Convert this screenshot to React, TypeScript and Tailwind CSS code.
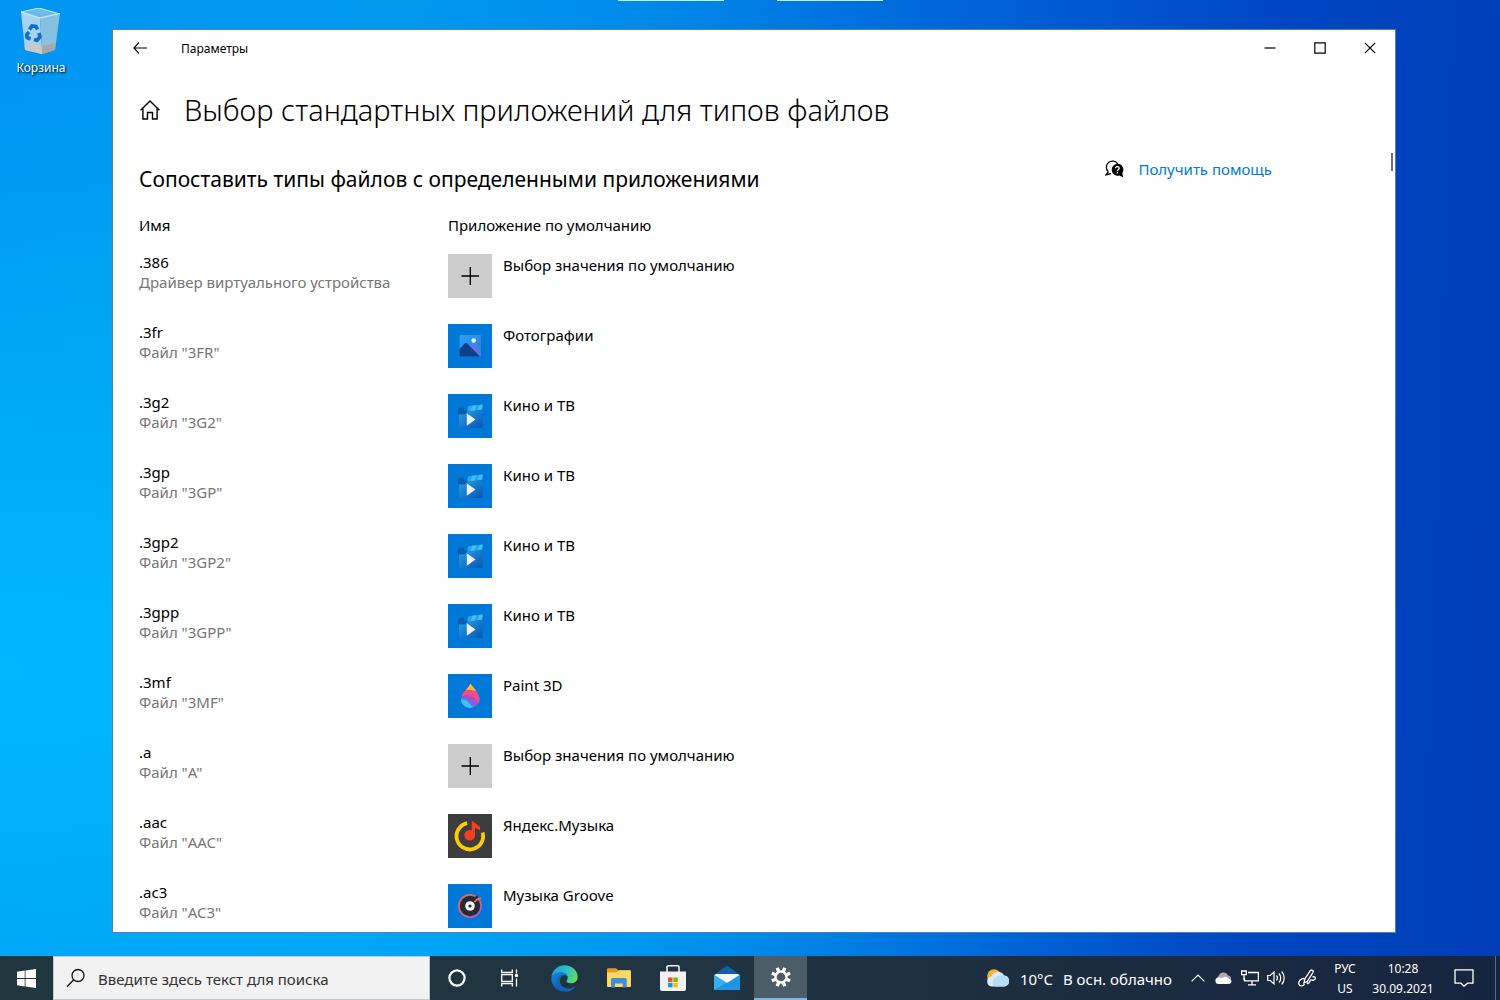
import { ReactNode } from "react";

type AppId = "none" | "photos" | "movies" | "paint" | "yandex" | "groove";

type FileType = {
  ext: string;
  description: string;
  app: AppId;
};

const appNames: Record<AppId, string> = {
  none: "Выбор значения по умолчанию",
  photos: "Фотографии",
  movies: "Кино и ТВ",
  paint: "Paint 3D",
  yandex: "Яндекс.Музыка",
  groove: "Музыка Groove",
};

const fileTypes: FileType[] = [
  { ext: ".386", description: "Драйвер виртуального устройства", app: "none" },
  { ext: ".3fr", description: 'Файл "3FR"', app: "photos" },
  { ext: ".3g2", description: 'Файл "3G2"', app: "movies" },
  { ext: ".3gp", description: 'Файл "3GP"', app: "movies" },
  { ext: ".3gp2", description: 'Файл "3GP2"', app: "movies" },
  { ext: ".3gpp", description: 'Файл "3GPP"', app: "movies" },
  { ext: ".3mf", description: 'Файл "3MF"', app: "paint" },
  { ext: ".a", description: 'Файл "A"', app: "none" },
  { ext: ".aac", description: 'Файл "AAC"', app: "yandex" },
  { ext: ".ac3", description: 'Файл "AC3"', app: "groove" },
];

const tileColors: Record<AppId, string> = {
  none: "bg-[#cccccc]",
  photos: "bg-[#0078d7]",
  movies: "bg-[#0078d7]",
  paint: "bg-[#0078d7]",
  yandex: "bg-[#3d3d3d]",
  groove: "bg-[#0078d7]",
};

/* All the tile glyphs are drawn on the 44x44 grid of the tile */
const tileGlyphs: Record<AppId, ReactNode> = {
  none: <path d="M13.500 22h17.500M22.300 13v18" stroke="#000" strokeWidth="1.300" />,
  photos: (
    <>
      <defs>
        <linearGradient id="photoSky" x1="0" y1="0" x2="1" y2="1">
          <stop offset="0" stopColor="#22a6f4" />
          <stop offset="1" stopColor="#3a74d8" />
        </linearGradient>
      </defs>
      <rect x="11.500" y="11" width="21.500" height="21.500" rx="1" fill="url(#photoSky)" />
      <path d="M20 25l4.500-5c.8-.8 1.600-.8 2.400 0l6 6.500v5a1 1 0 0 1-1 1h-7z" fill="#5b7be0" />
      <path d="M11.500 25l5.200-5.600c.8-.9 1.800-.9 2.600 0L32 32.500H12.500a1 1 0 0 1-1-1z" fill="#123f8c" />
      <circle cx="25.700" cy="16.500" r="2.300" fill="#e4f5ff" />
    </>
  ),
  movies: (
    <>
      <defs>
        <linearGradient id="clapBody" x1="0" y1="0" x2="1" y2="1">
          <stop offset="0" stopColor="#2aa0e2" />
          <stop offset="1" stopColor="#0754b4" />
        </linearGradient>
      </defs>
      <path d="M10 20.500v-4c0-1.600 1.200-2.700 2.700-2.700l3.300-.3v3l3 .5v3.500z" fill="#0a5cb0" />
      <path d="M19.500 14.500c0-1.300.8-2.200 2-2.400l13-1.600v5.200l-15 2z" fill="#27a5ea" />
      <path d="M24.500 11.700l4-.5-2 5.400-4 .5zM31.500 10.900l3-.4v2l-1.300 3.200-3.500.4z" fill="#45bdf2" />
      <path d="M11 20.500h6l3-3.500h14.500v15.500a1.500 1.500 0 0 1-1.500 1.500H12.500a1.500 1.500 0 0 1-1.500-1.500z" fill="url(#clapBody)" />
      <path d="M18.800 19.300v12.400l8.700-6.200z" fill="#f1f1f3" />
    </>
  ),
  paint: (
    <>
      <defs>
        <clipPath id="drop">
          <path d="M22.500 9.500c2.500 4.500 9 9.500 9 15.500 0 5-4 8.700-9.200 8.700S13 30 13 25c0-6 7.500-10.500 9.500-15.500z" />
        </clipPath>
      </defs>
      <g clipPath="url(#drop)">
        <rect x="12" y="9" width="20" height="26" fill="#a050d0" />
        <path d="M12 9h20v22c-3-3-4-7-8-8.500s-8-1-11-.5z" fill="#ee4f88" />
        <path d="M18 9h12v8.500c-4-.5-7-2.500-12-1.500z" fill="#f9c020" />
        <path d="M12 24.500c5-1 9 .5 11 3.500s5 4 8 3v5H12z" fill="#5a78ee" />
        <path d="M12 25.500c5-.5 7 1 9 3.500s3 4 6 4.500v2H12z" fill="#3cc4f4" />
      </g>
    </>
  ),
  yandex: (
    <>
      <path d="M19.200 9.100a13.300 13.300 0 1 0 15.400 9.400" fill="none" stroke="#fccc08" strokeWidth="3.800" />
      <circle cx="21.700" cy="21.300" r="5.300" fill="#fb3c1c" />
      <path d="M23.700 6.500l8.300 6.200v3.500l-5-2.500v8h-3.300z" fill="#fb3c1c" />
    </>
  ),
  groove: (
    <>
      <defs>
        <linearGradient id="grooveRing" x1="0" y1="0" x2="1" y2="1">
          <stop offset="0" stopColor="#f0734a" />
          <stop offset="1" stopColor="#9a5cd8" />
        </linearGradient>
      </defs>
      <circle cx="22" cy="22" r="12" fill="url(#grooveRing)" />
      <circle cx="22" cy="22" r="10.200" fill="#272a33" />
      <path d="M22 17l7-5.500 1.500 1.500-3 5z" fill="#272a33" />
      <path d="M26.500 18l2.200-2.300 4.300-1.700" fill="none" stroke="#f27a55" strokeWidth="1.800" />
      <circle cx="22" cy="22" r="4.800" fill="#f4f4f4" />
      <circle cx="22" cy="22" r="1.600" fill="#272a33" />
    </>
  ),
};

const AppTile = ({ app }: { app: AppId }) => (
  <span className={`block h-11 w-11 shrink-0 ${tileColors[app]}`}>
    <svg viewBox="0 0 44 44" className="h-11 w-11" aria-hidden="true">
      {tileGlyphs[app]}
    </svg>
  </span>
);

const RecycleBin = () => (
  <svg viewBox="0 0 44 48" className="h-12 w-11" aria-hidden="true">
    <path d="M2 4l18-4 21 6-20 5z" fill="#6cbcea" stroke="#c9e6f6" strokeWidth="1" />
    <path d="M2 4l19 6 2 36-17-4z" fill="#a5d3f0" />
    <path d="M21 10l20-5-5 37-13 4z" fill="#88c0e0" />
    <path d="M5.700 37l8-2 9.100 3 .2 8-17-4z" fill="#cfc9c5" />
    <path d="M22.800 38l14-3-.8 7-13 4z" fill="#a9a8a8" />
    <path d="M2 4l19 6 20-4.500" fill="none" stroke="#d6eefa" strokeWidth="1.200" />
    <g fill="none" stroke="#0d6fd0" strokeWidth="3.600">
      <path d="M10.500 21.500l2.500-3.500 4 .5 1.500 3" />
      <path d="M20 25l1 4-3 3.200-3-.7" />
      <path d="M11.500 31l-3.500-1.500-.3-3 2.300-2.500" />
    </g>
  </svg>
);

const WindowsLogo = () => (
  <svg viewBox="0 0 19 19" className="h-[19px] w-[19px]" fill="#fff" aria-hidden="true">
    <path d="M0 2.700l7.700-1.100v7.500H0zM8.500 1.500L19 0v9.100H8.500zM0 9.900h7.700v7.500L0 16.300zM8.500 9.900H19V19L8.500 17.500z" />
  </svg>
);

const CortanaIcon = () => (
  <svg viewBox="0 0 18 18" className="h-[18px] w-[18px]" fill="none" stroke="#fff" strokeWidth="2.200" aria-hidden="true">
    <circle cx="9" cy="9" r="7.600" />
  </svg>
);

const TaskViewIcon = () => (
  <svg viewBox="0 0 20 18" className="h-[18px] w-5" fill="none" stroke="#fff" strokeWidth="1.300" aria-hidden="true">
    <path d="M1.700.5v3h10.600v-3M1.700 17.500v-3h10.600v3M1.700 5.700h10.600v6.600H1.700zM16.500.5v4M16.500 9.500v8" />
    <circle cx="16.500" cy="6.500" r="1.100" fill="#fff" />
  </svg>
);

const EdgeIcon = () => (
  <svg viewBox="0 0 27 27" className="h-[27px] w-[27px]" aria-hidden="true">
    <defs>
      <linearGradient id="edgeTop" x1="0" y1="0.300" x2="1" y2="0.600">
        <stop offset="0" stopColor="#1c9ce0" />
        <stop offset="0.550" stopColor="#2fc0c8" />
        <stop offset="1" stopColor="#62dd58" />
      </linearGradient>
      <linearGradient id="edgeLow" x1="0" y1="0" x2="0.600" y2="1">
        <stop offset="0" stopColor="#1a86d8" />
        <stop offset="1" stopColor="#0e55a8" />
      </linearGradient>
    </defs>
    <path d="M.5 11.500C1.500 5 7 .3 13.500.3 21 .3 26.700 5.500 26.700 12c0 4-3.200 6.300-6.700 6.300-3 0-4.500-1-4.500-2 0-.8 1.200-1.300 1.200-3.500 0-2.700-2.700-5-6-5-5 0-9.200 3.200-10.200 3.700z" fill="url(#edgeTop)" />
    <path d="M.3 13.500C.3 9.500 4.500 7 9.500 7c4 0 7.200 2.400 7.200 5.600 0-1.600-1.600-2.600-3.200-2.600-2.700 0-4.700 2.700-4.700 6 0 5 4.500 7.700 8.500 7.700 3.500 0 6-1.400 7.200-2.400-1.800 3-5.800 5.400-11 5.400C6 26.700.3 20.700.3 13.500z" fill="url(#edgeLow)" />
    <path d="M8.800 16c0-3.300 2-6 4.700-6-4.200-1-7.700 2.500-7.700 7 0 5.500 4.700 9.500 9.700 9.500 4 0 7.500-2.500 9-5.200-1.200 1-3.700 2.400-7.200 2.400-4 0-8.500-2.700-8.500-7.700z" fill="#1266b8" />
  </svg>
);

const ExplorerIcon = () => (
  <svg viewBox="0 0 24 20" className="h-5 w-6" aria-hidden="true">
    <path d="M0 1.500A1.200 1.200 0 0 1 1.200.3h8l2 2.200H23v5H0z" fill="#e0a019" />
    <path d="M0 4.500h9.500L12 2.300h11a1 1 0 0 1 1 1V18a1 1 0 0 1-1 1H1a1 1 0 0 1-1-1z" fill="#ffd866" />
    <path d="M4 19.500v-8A1.500 1.500 0 0 1 5.500 10h12.700a1.500 1.500 0 0 1 1.500 1.500v8h-4v-4H8v4z" fill="#3d8fd8" />
  </svg>
);

const StoreIcon = () => (
  <svg viewBox="0 0 26 26" className="h-[26px] w-[26px]" aria-hidden="true">
    <path d="M7 8V1.800A1.300 1.300 0 0 1 8.300.8h9.400A1.300 1.300 0 0 1 19 2v6" fill="none" stroke="#f2f2f2" strokeWidth="1.600" />
    <path d="M0 6.500h26v17.500a2 2 0 0 1-2 2H2a2 2 0 0 1-2-2z" fill="#f2f2f2" />
    <path d="M8 12.500h4.500V17H8z" fill="#f04b22" />
    <path d="M13.300 12.500h4.500V17h-4.500z" fill="#7fba00" />
    <path d="M8 17.800h4.500v4.500H8z" fill="#00a0e8" />
    <path d="M13.300 17.800h4.500v4.500h-4.500z" fill="#fdb80a" />
  </svg>
);

const MailIcon = () => (
  <svg viewBox="0 0 28 26" className="h-[26px] w-7" aria-hidden="true">
    <path d="M1 10L14 .5 27 10v8H1z" fill="#0f5fb0" />
    <path d="M1 9.700l13 8.200 13-8.200v15.300H1z" fill="#35b0ee" />
    <path d="M1 25L27 9.700V25z" fill="#1e95de" />
    <path d="M3 9h22l1.500 1L14 18 1.500 10z" fill="#f4f7fa" />
  </svg>
);

const GearIcon = () => (
  <svg viewBox="0 0 20 20" className="h-5 w-5" fill="none" stroke="#fff" aria-hidden="true">
    <circle cx="10" cy="10" r="5.500" strokeWidth="2.400" />
    <path
      d="M15.500 7.700l3.600-1.500M12.300 4.500l1.500-3.600M7.700 4.500L6.200.9M4.500 7.700L.9 6.200M4.500 12.300l-3.600 1.500M7.700 15.500l-1.500 3.600M12.300 15.500l1.500 3.600M15.500 12.300l3.600 1.500"
      strokeWidth="3.400"
    />
  </svg>
);

const WeatherIcon = () => (
  <svg viewBox="0 0 24 20" className="h-5 w-6" aria-hidden="true">
    <circle cx="8" cy="8" r="6.800" fill="#f7b52c" />
    <path d="M6 18.500a5 5 0 0 1-.8-9.900A7 7 0 0 1 18 7.600a5.500 5.500 0 0 1 .5 10.900z" fill="#d6edf9" />
    <path d="M9 18.500a4.500 4.500 0 0 1 1-8.500 6 6 0 0 1 8-2.400 5.500 5.500 0 0 1 .5 10.900z" fill="#b6def5" />
  </svg>
);

const CloudIcon = () => (
  <svg viewBox="0 0 18 12" className="h-3 w-[18px]" aria-hidden="true">
    <path d="M3 8.500a3 3 0 0 1 .8-4.800A5 5 0 0 1 13 3.500a3.600 3.600 0 0 1 3 4z" fill="#a9adb2" />
    <path d="M3.500 12a3.300 3.300 0 0 1-.6-6.500c2-.4 3 .3 3.800.8a4.500 4.500 0 0 1 6-.6c.8.500 1 1 1.600 1a2.700 2.700 0 0 1 0 5.300z" fill="#fff" />
  </svg>
);

const NetworkIcon = () => (
  <svg viewBox="0 0 18 16" className="h-4 w-[18px]" fill="none" stroke="#fff" strokeWidth="1.300" aria-hidden="true">
    <path d="M7 2.500h10.400v8.400H3.500V8M11 11v3.500M7 14.900h8" />
    <path d="M.6 1h4.700v3.700H.6zM3 5v5" />
  </svg>
);

const SoundIcon = () => (
  <svg viewBox="0 0 19 16" className="h-4 w-[19px]" fill="none" stroke="#fff" strokeWidth="1.200" aria-hidden="true">
    <path d="M.7 5.500h2.500L7 2v12l-3.800-3.500H.7z" />
    <path d="M9.500 5.500c1.300 1.500 1.300 3.500 0 5M12 3.500c2.300 2.500 2.300 6.500 0 9M14.700 1.500c3.300 3.700 3.300 9.300 0 13" />
  </svg>
);

const PenIcon = () => (
  <svg viewBox="0 0 18 18" className="h-[18px] w-[18px]" fill="none" stroke="#fff" strokeWidth="1.300" aria-hidden="true">
    <path d="M6 14l.8-4L12.500 1.500c1-1.200 3.300.3 2.500 1.800L9.500 12z" />
    <path d="M6.500 9.500C3 9.300.3 12 .8 14.800s4.500 2.700 5.700.2M9.500 12c-1 2.500.5 3.500 1.700 1.500s.8-3 2.300-2.500 3.500.2 3.800-1.500-1.500-2-3-1.500" />
  </svg>
);

const HelpIcon = () => (
  <svg viewBox="0 0 19 18" className="h-[18px] w-[19px]" aria-hidden="true">
    <path d="M3.300 11.800A6.200 6.200 0 1 1 12.800 4M3.300 11.800L1 14.800l5-1.300" fill="none" stroke="#000" strokeWidth="1.300" />
    <path d="M12.300 3.700a6 6 0 0 1 5 9.400l.9 4.200-4-1.800a6 6 0 1 1-1.900-11.800z" fill="#000" />
    <path d="M10.500 8.300c0-2.300 3.700-2.300 3.700 0 0 1.300-1.800 1.300-1.800 2.900M12.400 12.300v1.300" fill="none" stroke="#fff" strokeWidth="1.300" />
  </svg>
);

const taskbarApps = [
  { name: "Microsoft Edge", icon: <EdgeIcon /> },
  { name: "Проводник", icon: <ExplorerIcon /> },
  { name: "Microsoft Store", icon: <StoreIcon /> },
  { name: "Почта", icon: <MailIcon /> },
];

const SettingsWindow = () => (
  <section className="flex h-full flex-col overflow-hidden border border-[#0b4a8c]/70 bg-white text-black">
    <div className="flex h-9 shrink-0 items-center">
      <button type="button" aria-label="Назад" className="flex h-9 w-[53px] items-center justify-center">
        <svg viewBox="0 0 14 12" className="h-3 w-3.5" fill="none" stroke="#000" strokeWidth="1.200">
          <path d="M6 .7L.9 6 6 11.300M1 6h13" />
        </svg>
      </button>
      <span className="ml-[15px] pt-px text-[12px]">Параметры</span>
      <div className="ml-auto flex">
        <button type="button" aria-label="Свернуть" className="flex h-9 w-[50px] items-center justify-center">
          <svg viewBox="0 0 12 12" className="h-3 w-3" stroke="#000" strokeWidth="1.200">
            <path d="M.5 6h11" />
          </svg>
        </button>
        <button type="button" aria-label="Развернуть" className="flex h-9 w-[50px] items-center justify-center">
          <svg viewBox="0 0 12 12" className="h-3 w-3" fill="none" stroke="#000" strokeWidth="1.200">
            <path d="M.8.8h10.400v10.400H.8z" />
          </svg>
        </button>
        <button type="button" aria-label="Закрыть" className="flex h-9 w-[50px] items-center justify-center">
          <svg viewBox="0 0 12 12" className="h-3 w-3" stroke="#000" strokeWidth="1.200">
            <path d="M.8.8l10.400 10.400M11.200.8L.8 11.200" />
          </svg>
        </button>
      </div>
    </div>

    <div className="mt-[22px] flex shrink-0 items-center gap-6 pl-[27px]">
      <a href="#home" aria-label="Главная">
        <svg viewBox="0 0 20 20" className="h-5 w-5" fill="none" stroke="#000" strokeWidth="1.400">
          <path d="M.6 10.300L10 1l9.400 9.300M2.900 8.500V19h4.600v-6.500h5V19h4.600V8.500" />
        </svg>
      </a>
      <h1 className="text-[29px] leading-[44px] font-light">Выбор стандартных приложений для типов файлов</h1>
    </div>

    <div className="mt-[19px] flex min-h-0 flex-1 items-start justify-between">
      <div className="min-w-0 pl-[26px]">
        <h2 className="mt-3.5 text-[21px] leading-7">Сопоставить типы файлов с определенными приложениями</h2>
        <table className="mt-5 text-left text-[15px] leading-5">
          <thead>
            <tr className="h-[39px] align-top">
              <th scope="col" className="w-[309px] pt-0.5 font-normal">Имя</th>
              <th scope="col" className="pt-0.5 font-normal">Приложение по умолчанию</th>
            </tr>
          </thead>
          <tbody>
            {fileTypes.map((item) => (
              <tr key={item.ext} className="h-[70px] align-top">
                <td>
                  <div>{item.ext}</div>
                  <div className="text-[#767676]">{item.description}</div>
                </td>
                <td className="pt-0.5">
                  <button type="button" className="flex items-start gap-[11px] text-left">
                    <AppTile app={item.app} />
                    <span className="pt-px">{appNames[item.app]}</span>
                  </button>
                </td>
              </tr>
            ))}
          </tbody>
        </table>
      </div>
      <div className="flex items-start">
        <a href="#help" className="mt-1.5 flex items-center gap-3.5 text-[15px] leading-6 text-[#0078d7]">
          <HelpIcon />
          Получить помощь
        </a>
        <div className="mt-0.5 mr-0.5 ml-[119px] h-[18px] w-0.5 bg-[#707070]" />
      </div>
    </div>
  </section>
);

const Taskbar = () => (
  <footer className="flex h-11 shrink-0 items-stretch bg-linear-to-r from-[#20363f] via-[#203341] to-[#17243f] text-white">
    <button type="button" aria-label="Пуск" className="flex w-[53px] items-center justify-center">
      <WindowsLogo />
    </button>
    <label className="flex w-[377px] items-center gap-3 border border-[#c4c8ca] bg-[#f2f2f2] pl-3">
      <svg viewBox="0 0 20 20" className="h-5 w-5 shrink-0" fill="none" stroke="#111" strokeWidth="1.300">
        <circle cx="12" cy="7.500" r="6" />
        <path d="M7.700 11.800L1 18.800" />
      </svg>
      <input
        type="text"
        aria-label="Поиск"
        placeholder="Введите здесь текст для поиска"
        className="min-w-0 flex-1 bg-transparent pt-0.5 text-[15px] text-[#333] outline-none placeholder:text-[#333]"
      />
    </label>
    <button type="button" aria-label="Кортана" className="flex w-[53px] items-center justify-center">
      <CortanaIcon />
    </button>
    <button type="button" aria-label="Представление задач" className="flex w-[53px] items-center justify-center">
      <TaskViewIcon />
    </button>
    <div className="ml-0.5 flex gap-px">
      {taskbarApps.map((app) => (
        <button key={app.name} type="button" aria-label={app.name} className="flex w-[53px] items-center justify-center">
          {app.icon}
        </button>
      ))}
      <button
        type="button"
        aria-label="Параметры"
        className="flex w-[53px] items-center justify-center border-b-2 border-[#76b9ed] bg-[#4d5d67]"
      >
        <GearIcon />
      </button>
    </div>

    <div className="ml-auto flex items-stretch">
      <button type="button" className="mr-3 flex items-center gap-2.5 text-[15px]">
        <WeatherIcon />
        <span className="pt-0.5">10°C</span>
        <span className="pt-0.5">В осн. облачно</span>
      </button>
      <button type="button" aria-label="Скрытые значки" className="flex w-[27px] items-center justify-center">
        <svg viewBox="0 0 14 8" className="h-2 w-3.5" fill="none" stroke="#fff" strokeWidth="1.200">
          <path d="M.6 7.400L7 1l6.400 6.400" />
        </svg>
      </button>
      <button type="button" aria-label="OneDrive" className="flex w-[26px] items-center justify-center">
        <CloudIcon />
      </button>
      <button type="button" aria-label="Сеть" className="flex w-[26px] items-center justify-center">
        <NetworkIcon />
      </button>
      <button type="button" aria-label="Громкость" className="flex w-[26px] items-center justify-center">
        <SoundIcon />
      </button>
      <button type="button" aria-label="Windows Ink" className="flex w-9 items-center justify-center">
        <PenIcon />
      </button>
      <button type="button" className="flex w-10 flex-col items-center justify-center pt-0.5 text-[12px] leading-5">
        <span>РУС</span>
        <span>US</span>
      </button>
      <button type="button" className="flex w-[76px] flex-col items-center justify-center pt-0.5 text-[12px] leading-5">
        <span>10:28</span>
        <span>30.09.2021</span>
      </button>
      <button type="button" aria-label="Уведомления" className="flex w-[46px] items-center justify-center">
        <svg viewBox="0 0 20 18" className="h-[18px] w-5" fill="none" stroke="#fff" strokeWidth="1.300">
          <path d="M1 .8h18v13.400h-5.500l-3.500 3-3-3H1z" />
        </svg>
      </button>
      <div className="mr-1 ml-2 w-px bg-[#5b6880]" />
    </div>
  </footer>
);

const App = () => {
  return (
    <div className="flex h-screen flex-col overflow-hidden bg-[radial-gradient(ellipse_at_0%_67%,#00b8ff_0%,#00b8ff00_62%),linear-gradient(92deg,#0096f2_0%,#0099f0_26%,#008aea_42%,#0074e0_54%,#005cd2_68%,#0046c2_84%,#003eb8_100%)] font-['Noto_Sans',sans-serif]">
      <main className="relative flex min-h-0 flex-1">
        {/* edges of the snapped panels above the screen */}
        <div className="absolute inset-x-0 top-0 flex justify-center gap-[53px]">
          <div className="h-px w-[106px] bg-[#bfeaff]" />
          <div className="h-px w-[106px] bg-[#bfeaff]" />
        </div>
        <div className="w-[112px] shrink-0 pt-2 pl-2">
          <button type="button" className="flex w-[66px] flex-col items-center gap-1 text-[12px] leading-4 text-white [text-shadow:1px_1px_2px_#000]">
            <RecycleBin />
            Корзина
          </button>
        </div>
        <div className="mt-[29px] mr-[104px] mb-[23px] min-w-0 flex-1">
          <SettingsWindow />
        </div>
      </main>
      <Taskbar />
    </div>
  );
};

export default App;
